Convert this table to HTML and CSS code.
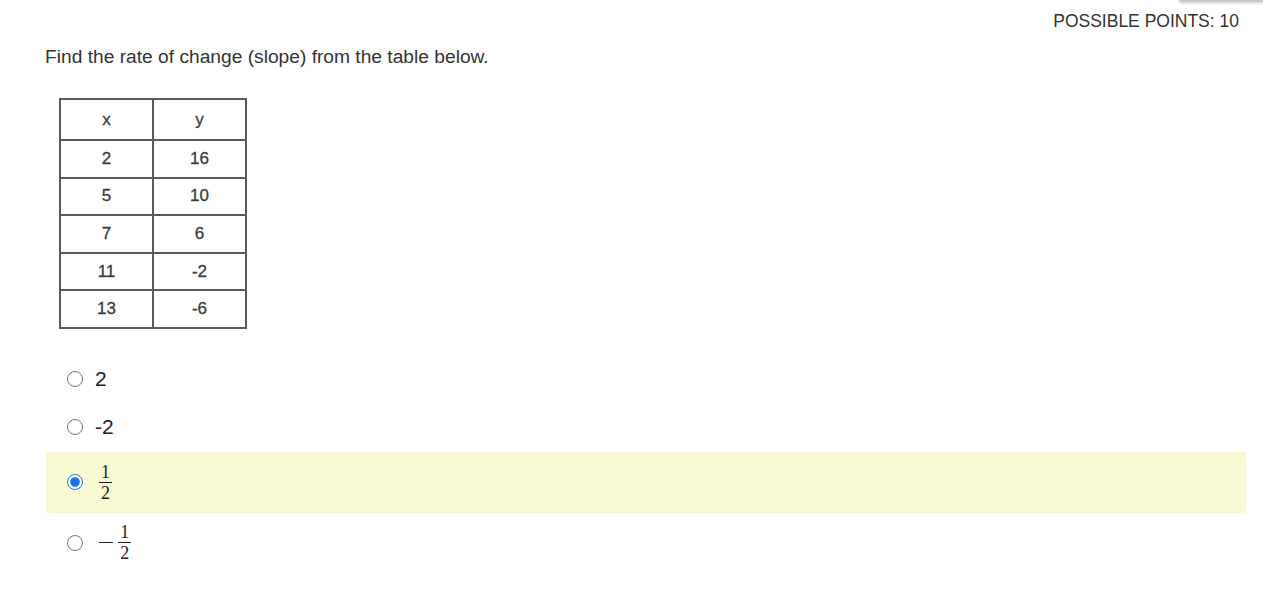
FILE: index.html
```html
<!DOCTYPE html>
<html>
<head>
<meta charset="utf-8">
<link rel="stylesheet" href="styles.css">
</head>
<body>
<div class="topbar-edge"></div>
<div class="page">
  <div class="points">POSSIBLE POINTS: 10</div>
  <div class="question">Find the rate of change (slope) from the table below.</div>
  <table class="data">
    <tr><td>x</td><td>y</td></tr>
    <tr><td>2</td><td>16</td></tr>
    <tr><td>5</td><td>10</td></tr>
    <tr><td>7</td><td>6</td></tr>
    <tr><td>11</td><td>-2</td></tr>
    <tr><td>13</td><td>-6</td></tr>
  </table>
  <div class="options">
    <label class="opt"><input type="radio" name="a"><span class="txt">2</span></label>
    <label class="opt"><input type="radio" name="a"><span class="txt">-2</span></label>
    <label class="opt sel"><input type="radio" name="a" checked><span class="frac"><span class="num">1</span><span class="den">2</span></span></label>
    <label class="opt tall"><input type="radio" name="a"><span class="minus">−</span><span class="frac"><span class="num">1</span><span class="den">2</span></span></label>
  </div>
</div>
</body>
</html>
```
FILE: styles.css
```css
html, body { margin: 0; padding: 0; background: #fff; }
body { font-family: "Liberation Sans", Arial, sans-serif; color: #333; }
.topbar-edge {
  position: absolute; top: 0; right: 0; width: 84px; height: 2px;
  background: #c8c8c8; box-shadow: 0 1px 3px rgba(0,0,0,0.25);
  border-bottom-left-radius: 3px;
}
.page { padding: 0 16px 0 45px; }
.points {
  text-align: right; font-size: 17.5px; line-height: 20px;
  padding-top: 11px; padding-right: 8px; color: #333;
}
.question { font-size: 19.2px; line-height: 22px; margin-top: 15px; color: #333; }
.data {
  border-collapse: collapse; margin: 30px 0 0 14px;
  font-family: "Liberation Sans", Arial, sans-serif; font-size: 17px; color: #3c3c3c;
  border: 2px solid #5a5a5a;
  -webkit-text-stroke: 0.3px #3c3c3c;
}
.data td {
  border: 2px solid #5a5a5a; width: 91px; height: 35.6px; padding: 0;
  text-align: center; vertical-align: middle;
}
.data tr:first-child td { height: 39px; }
.options { margin-top: 26px; display: flex; flex-direction: column; }
.opt {
  display: flex; align-items: center; height: 48px; padding-left: 21px;
  font-size: 21px; color: #222; width: 1180px;
}
.opt input { margin: 0 12px 0 1px; width: 16px; height: 16px; accent-color: #1a73e8; }
.opt.sel { background: #fafad2; height: 61px; margin-left: 1px; padding-left: 20px; margin-top: 1px; }
.opt.tall { height: 60px; }
.frac {
  display: inline-flex; flex-direction: column; align-items: center; margin-left: 4px;
  font-family: "Liberation Serif", "DejaVu Serif", serif; font-size: 18px; line-height: 18px; color: #222;
}
.frac .num { border-bottom: 1px solid #222; padding: 0 2px 1px; }
.frac .den { padding-top: 1px; }
.minus {
  display: inline-block; font-family: "Liberation Serif", serif; font-size: 20px;
  margin-left: 5px; margin-right: 4px; color: #222; transform: scaleX(1.5);
}
.tall .frac { margin-left: 3px; }
```
